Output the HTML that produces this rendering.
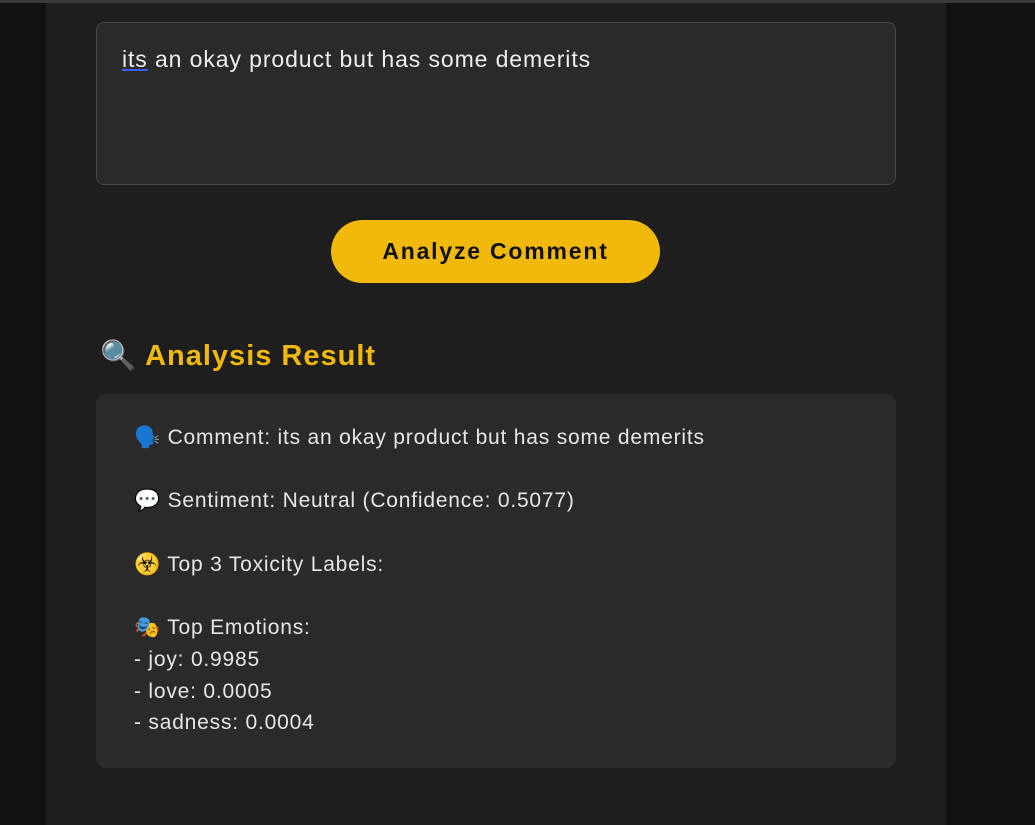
<!DOCTYPE html>
<html><head><meta charset="utf-8"><style>
html,body{margin:0;padding:0;width:1035px;height:825px;overflow:hidden;background:#111;font-family:"Liberation Sans","Noto Sans CJK JP",sans-serif;}
.top{position:absolute;left:0;top:0;width:1035px;height:3px;background:#3a3a3a;}
.col{position:absolute;left:46px;top:3px;width:900px;height:822px;background:#1e1e1e;}
.ta{position:absolute;left:96px;top:22px;width:798px;height:161px;background:#2a2a2a;border:1px solid #484848;border-radius:8px;}
.ta span{position:absolute;left:25px;top:23px;color:#eee;font-size:23px;letter-spacing:0.9px;}
.ta u{text-decoration-color:#3b5bff;}
.btn{position:absolute;left:331px;top:220px;width:329px;height:63px;border-radius:32px;background:#f0b90b;color:#111;font-weight:bold;font-size:23px;letter-spacing:1.8px;text-align:center;line-height:63px;}
h2{position:absolute;left:100px;top:339px;margin:0;font-size:29px;letter-spacing:1px;color:#f0b90b;font-weight:bold;}
.res{position:absolute;left:96px;top:394px;width:800px;height:374px;background:#2a2a2a;border-radius:10px;}
.res div{position:absolute;left:38px;top:28px;color:#e6e6e6;font-size:21px;letter-spacing:0.8px;line-height:31.7px;white-space:pre;}
</style></head><body>
<div class="top"></div>
<div class="col"></div>
<div class="ta"><span><u>its</u> an okay product but has some demerits</span></div>
<div class="btn">Analyze Comment</div>
<h2>🔍 Analysis Result</h2>
<div class="res"><div>🗣️ Comment: its an okay product but has some demerits

💬 Sentiment: Neutral (Confidence: 0.5077)

☣️ Top 3 Toxicity Labels:

🎭 Top Emotions:
- joy: 0.9985
- love: 0.0005
- sadness: 0.0004</div></div>
</body></html>
